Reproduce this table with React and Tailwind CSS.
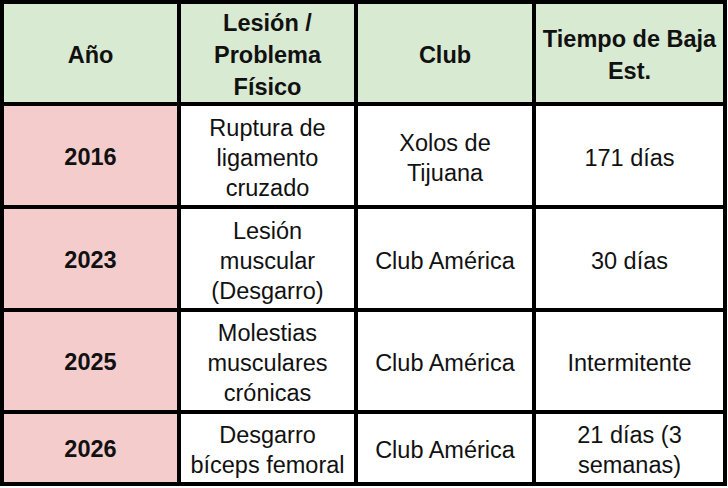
import React from "react";

const rows = [
  { year: "2016", injury: ["Ruptura de", "ligamento", "cruzado"], club: ["Xolos de", "Tijuana"], time: ["171 días"] },
  { year: "2023", injury: ["Lesión", "muscular", "(Desgarro)"], club: ["Club América"], time: ["30 días"] },
  { year: "2025", injury: ["Molestias", "musculares", "crónicas"], club: ["Club América"], time: ["Intermitente"] },
  { year: "2026", injury: ["Desgarro", "bíceps femoral"], club: ["Club América"], time: ["21 días (3", "semanas)"] },
];

const Lines = ({ lines }) =>
  lines.map((l, i) => (
    <React.Fragment key={i}>
      {l}
      {i < lines.length - 1 && <br />}
    </React.Fragment>
  ));

const Cell = ({ children, className = "" }) => (
  <div className={`flex items-center justify-center pt-[4px] text-center whitespace-nowrap ${className}`}>
    <div>{children}</div>
  </div>
);

export default function App() {
  return (
    <div className="w-[728px] h-[488px] bg-white font-['Liberation_Sans',Arial,sans-serif] text-[#111]">
      <div className="grid w-[727px] grid-cols-[173px_173px_174px_1fr] grid-rows-[98px_99px_99px_98px_68px] gap-[4px] p-[4px] bg-black text-[23.5px]">
        <Cell className="bg-[#d9ead3] font-bold leading-[32px]">Año</Cell>
        <Cell className="bg-[#d9ead3] font-bold leading-[32px]">
          <Lines lines={["Lesión /", "Problema", "Físico"]} />
        </Cell>
        <Cell className="bg-[#d9ead3] font-bold leading-[32px]">Club</Cell>
        <Cell className="bg-[#d9ead3] font-bold leading-[32px]">
          <Lines lines={["Tiempo de Baja", "Est."]} />
        </Cell>
        {rows.map((r) => (
          <React.Fragment key={r.year}>
            <Cell className="bg-[#f4cccc] font-bold">{r.year}</Cell>
            <Cell className="bg-white leading-[30px]">
              <Lines lines={r.injury} />
            </Cell>
            <Cell className="bg-white leading-[30px]">
              <Lines lines={r.club} />
            </Cell>
            <Cell className="bg-white leading-[30px]">
              <Lines lines={r.time} />
            </Cell>
          </React.Fragment>
        ))}
      </div>
    </div>
  );
}
